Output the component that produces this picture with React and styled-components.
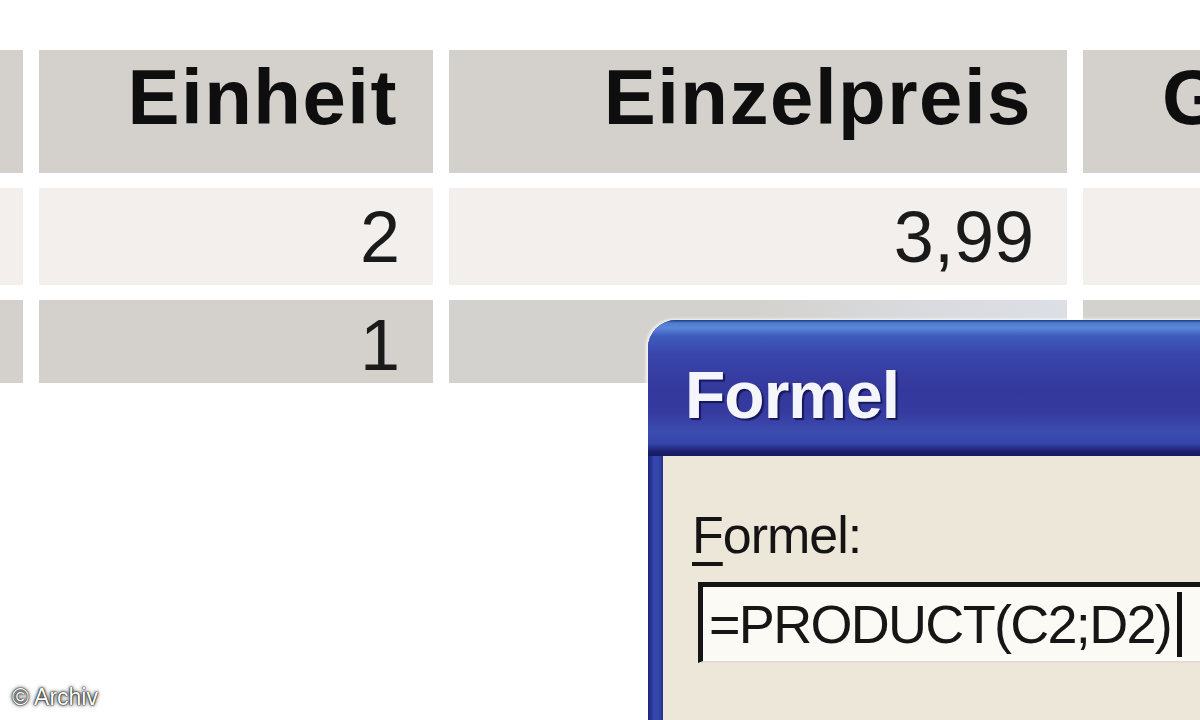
import React from "react";
import styled, { createGlobalStyle } from "styled-components";

const GlobalStyle = createGlobalStyle`
  html, body {
    margin: 0;
    padding: 0;
    background: #ffffff;
    overflow: hidden;
  }
  body {
    font-family: "Liberation Sans", Arial, sans-serif;
  }
`;

const Stage = styled.div`
  position: relative;
  width: 1200px;
  height: 720px;
  overflow: hidden;
  background: #ffffff;
  padding-top: 50px;
  box-sizing: border-box;
`;

/* Word table: narrow cut-off first column, Einheit, Einzelpreis, Gesamt */
const Table = styled.div`
  display: grid;
  grid-template-columns: 23px 394px 618px 600px;
  grid-template-rows: 123px 97px 83px;
  column-gap: 16px;
  row-gap: 15px;
`;

const Cell = styled.div`
  display: flex;
  min-width: 0;
  justify-content: ${(p) => (p.$left ? "flex-start" : "flex-end")};
  align-items: ${(p) => (p.$head ? "flex-start" : "center")};
  background: ${(p) =>
    p.$tone === "light"
      ? "#f2efec"
      : p.$tone === "tint"
      ? "linear-gradient(90deg, #d4d2ce 0%, #d4d2ce 50%, #d8dade 75%, #dcdfe5 100%)"
      : "#d4d1cd"};
  white-space: nowrap;
`;

const HeadText = styled.span`
  margin: 8px ${(p) => (p.$left ? "0" : "35px")} 0
    ${(p) => (p.$left ? "79px" : "0")};
  font-family: "Liberation Sans", Arial, sans-serif;
  font-weight: 700;
  font-size: 78px;
  line-height: 78px;
  letter-spacing: 1.5px;
  color: #0e0e0e;
`;

const NumText = styled.span`
  margin: ${(p) => (p.$low ? "6px" : "0")} 33px 0 0;
  font-family: "Liberation Sans", Arial, sans-serif;
  font-weight: 400;
  font-size: 72px;
  line-height: 72px;
  color: #1a1a1a;
`;

/* XP style dialog window laid over the table */
const Window = styled.div`
  position: absolute;
  left: 648px;
  top: 320px;
  width: 640px;
  height: 460px;
  border-top-left-radius: 28px;
  overflow: hidden;
  display: flex;
  flex-direction: column;
  background: linear-gradient(
    90deg,
    #1b247c 0px,
    #3546ad 6px,
    #3445a9 11px,
    #23308e 15px
  );
  box-shadow: -2px -1px 3px rgba(255, 255, 255, 0.8);
`;

const TitleBar = styled.div`
  height: 136px;
  flex: none;
  box-sizing: border-box;
  padding: 42px 0 0 37px;
  background: linear-gradient(
    180deg,
    #1f3a80 0px,
    #4f7dd2 3px,
    #5a86d8 8px,
    #3f5cbc 16px,
    #3945aa 34px,
    #34389c 70px,
    #353a9e 92px,
    #3d4cb0 112px,
    #3544a8 124px,
    #1c2070 131px,
    #161a5e 136px
  );
`;

const TitleText = styled.span`
  font-family: "Liberation Sans", Arial, sans-serif;
  font-weight: 700;
  font-size: 66px;
  line-height: 66px;
  letter-spacing: -1px;
  color: #f4f6fb;
  text-shadow: 2px 2px 1px #15185a, 1px 1px 0 #20247a;
`;

const Frame = styled.div`
  flex: 1;
  display: flex;
  padding-left: 15px;
`;

const Body = styled.div`
  flex: 1;
  display: flex;
  flex-direction: column;
  align-items: flex-start;
  gap: 21px;
  box-sizing: border-box;
  padding: 53px 0 0 29px;
  background: #ede7d9;
`;

const Label = styled.span`
  font-family: "Liberation Sans", Arial, sans-serif;
  font-size: 52px;
  line-height: 52px;
  letter-spacing: -1px;
  color: #141414;

  u {
    text-decoration-thickness: 4px;
    text-underline-offset: 9px;
  }
`;

const Field = styled.div`
  width: 640px;
  height: 81px;
  box-sizing: border-box;
  margin-left: 6px;
  display: flex;
  align-items: flex-start;
  padding: 5px 0 0 6px;
  border-top: 5px solid #151515;
  border-left: 5px solid #151515;
  border-bottom: 2px solid #e2ddd0;
  background: #fbfaf5;
`;

const FieldText = styled.span`
  font-family: "Liberation Sans", Arial, sans-serif;
  font-size: 54px;
  line-height: 54px;
  letter-spacing: -1.7px;
  color: #161616;
  margin-top: 5px;
`;

const Caret = styled.span`
  display: inline-block;
  width: 5px;
  height: 65px;
  margin-left: 6px;
  background: #111111;
`;

const Credit = styled.span`
  position: absolute;
  left: 12px;
  bottom: 11px;
  font-family: "Liberation Sans", Arial, sans-serif;
  font-size: 23px;
  line-height: 23px;
  color: #ffffff;
  text-shadow: 0 0 4px #000, 0 0 2px #000, 0 0 1px #000;
`;

export default function App() {
  return (
    <>
      <GlobalStyle />
      <Stage>
        <Table>
          <Cell $head />
          <Cell $head>
            <HeadText>Einheit</HeadText>
          </Cell>
          <Cell $head>
            <HeadText>Einzelpreis</HeadText>
          </Cell>
          <Cell $head $left>
            <HeadText $left>Gesamtpreis</HeadText>
          </Cell>

          <Cell $tone="light" />
          <Cell $tone="light">
            <NumText>2</NumText>
          </Cell>
          <Cell $tone="light">
            <NumText>3,99</NumText>
          </Cell>
          <Cell $tone="light" />

          <Cell />
          <Cell>
            <NumText $low>1</NumText>
          </Cell>
          <Cell $tone="tint" />
          <Cell $tone="tint" />
        </Table>

        <Window>
          <TitleBar>
            <TitleText>Formel</TitleText>
          </TitleBar>
          <Frame>
            <Body>
              <Label>
                <u>F</u>ormel:
              </Label>
              <Field>
                <FieldText>=PRODUCT(C2;D2)</FieldText>
                <Caret />
              </Field>
            </Body>
          </Frame>
        </Window>

        <Credit>© Archiv</Credit>
      </Stage>
    </>
  );
}
